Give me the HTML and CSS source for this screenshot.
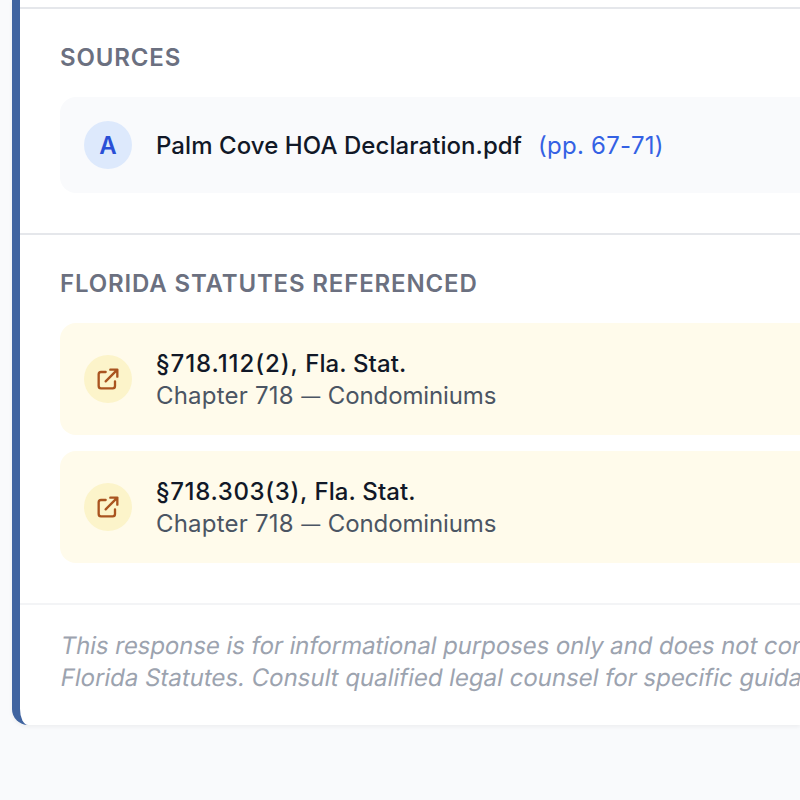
FILE: index.html
```
<!DOCTYPE html>
<html lang="en">
<head>
  <meta charset="utf-8">
  <meta name="viewport" content="width=device-width, initial-scale=1">
  <title>Sources</title>
  <link rel="stylesheet" href="styles.css">
</head>
<body>

<div class="answer">
  <section class="section">
    <h4>SOURCES</h4>
    <div class="source">
      <span class="badge">A</span>
      <div class="source-text"><span class="source-name">Palm Cove HOA Declaration.pdf</span><span class="pages">(pp. 67-71)</span></div>
    </div>
  </section>

  <section class="section">
    <h4>FLORIDA STATUTES REFERENCED</h4>
    <div class="statute-list">
      <div class="source statute">
        <span class="badge">
          <svg viewBox="0 0 24 24"><path d="M10 6H6a2 2 0 0 0-2 2v10a2 2 0 0 0 2 2h10a2 2 0 0 0 2-2v-4M14 4h6m0 0v6m0-6L10 14"/></svg>
        </span>
        <div class="source-text">
          <div class="statute-name"><span class="number wide">§718.112(2),</span> Fla. Stat.</div>
          <div class="chapter"><span class="chapter-no">Chapter 718</span> <span class="dash">—</span> Condominiums</div>
        </div>
      </div>
      <div class="source statute">
        <span class="badge">
          <svg viewBox="0 0 24 24"><path d="M10 6H6a2 2 0 0 0-2 2v10a2 2 0 0 0 2 2h10a2 2 0 0 0 2-2v-4M14 4h6m0 0v6m0-6L10 14"/></svg>
        </span>
        <div class="source-text">
          <div class="statute-name"><span class="number">§718.303(3),</span> Fla. Stat.</div>
          <div class="chapter"><span class="chapter-no">Chapter 718</span> <span class="dash">—</span> Condominiums</div>
        </div>
      </div>
    </div>
  </section>

  <footer class="disclaimer">
    <p class="first">This response is for informational purposes only and does not constitute</p>
    <p>Florida Statutes. Consult qualified legal counsel for specific guidance.</p>
  </footer>
</div>

</body>
</html>
```
FILE: styles.css
```
* {
  box-sizing: border-box;
}
body {
  margin: 0;
  height: 800px;
  overflow: hidden;
  background: #f9fafc;
  color: #111827;
  font-family: Inter, "Liberation Sans", sans-serif;
  font-size: 24px;
  line-height: 32px;
  white-space: nowrap;
}

.answer {
  margin-left: 12px;
  padding-top: 7px;
  background: #fff;
  border-left: 8px solid #4064a0;
  border-radius: 0 0 0 16px;
  box-shadow: 0 2px 4px rgba(0, 0, 0, 0.05);
}
.section {
  padding: 33px 0 40px 40px;
  border-top: 2px solid #e5e7eb;
}
h4 {
  margin: 0 0 23px;
  color: #6b7080;
  font-size: 24px;
  font-weight: 600;
  letter-spacing: 0.85px;
}

.source {
  display: flex;
  align-items: center;
  gap: 24px;
  padding: 24px;
  border-radius: 16px 0 0 16px;
  background: #f9fafc;
}
.source-text {
  margin: 1px 0 -1px;
}
.badge {
  display: flex;
  align-items: center;
  justify-content: center;
  width: 48px;
  height: 48px;
  border-radius: 50%;
  background: #dde9fc;
  color: #2a4fd6;
  font-weight: 600;
  line-height: 34px;
  padding-top: 1px;
}
.source-name {
  font-weight: 500;
  letter-spacing: 0.07px;
}
.statute-name {
  font-weight: 500;
  letter-spacing: 0.12px;
}
.number {
  letter-spacing: 0.65px;
}
.number.wide {
  letter-spacing: 0.93px;
}
.pages {
  margin-left: 16px;
  color: #3461e4;
  letter-spacing: 0.27px;
}

.statute-list {
  display: flex;
  flex-direction: column;
  gap: 16px;
}
.statute {
  background: #fffbeb;
}
.statute .badge {
  padding: 0;
  background: #fcf4ca;
}
.badge svg {
  width: 28px;
  height: 28px;
  fill: none;
  stroke: #a9541f;
  stroke-width: 2;
  stroke-linecap: round;
  stroke-linejoin: round;
}
.chapter {
  color: #4b5563;
  letter-spacing: -0.12px;
}
.chapter-no {
  letter-spacing: 0.2px;
}
.dash {
  margin: 0 1px;
  font-size: 19px;
  line-height: 1;
  vertical-align: 1px;
}

.disclaimer {
  padding: 25px 0 31px 41px;
  border-top: 2px solid #f3f4f6;
  color: #9ca3af;
}
/* slanted upright letters instead of the italic cut */
.disclaimer p {
  margin: 0;
  overflow: hidden;
  letter-spacing: -0.02px;
  transform: skewX(-10deg);
}
.disclaimer .first {
  letter-spacing: -0.08px;
}
```
